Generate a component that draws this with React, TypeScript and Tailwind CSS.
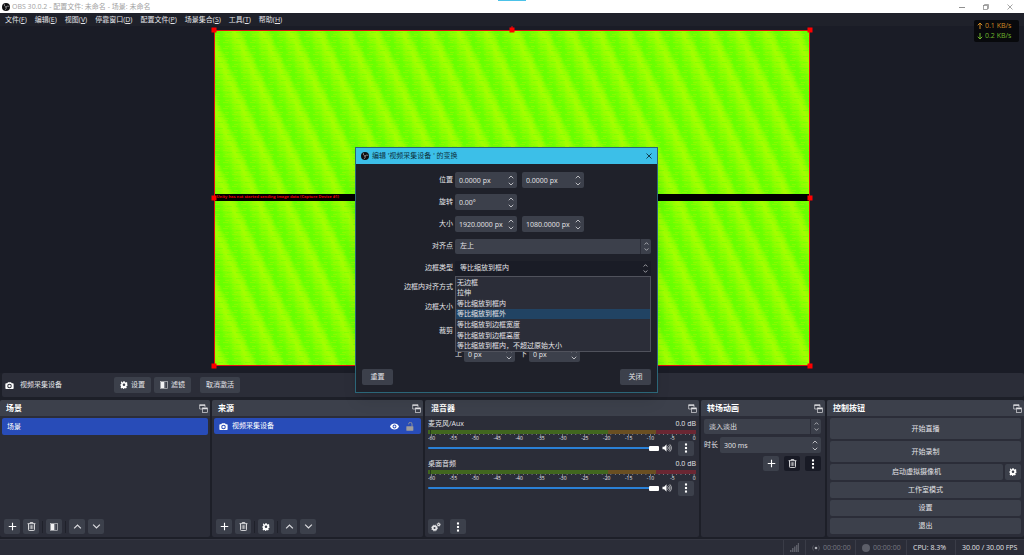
import React from "react";

type KidsProps = { children?: React.ReactNode; className?: string };

const ObsLogo = ({ className = "" }: { className?: string }) => (
  <svg viewBox="0 0 24 24" className={className} aria-hidden="true">
    <circle cx="12" cy="12" r="12" fill="#101012" />
    <g fill="none" stroke="#b9b9bc" strokeWidth="2" strokeLinecap="round">
      <path d="M7 4.5c-.6 3.600 1.400 6.600 5 7.500" />
      <path d="M20.500 10c-3.400-1.400-6.800-.8-8.500 2" />
      <path d="M9.500 20.500c3-1.800 4.200-5 2.500-8.500" />
    </g>
  </svg>
);

const CameraIcon = () => (
  <svg viewBox="0 0 24 24" className="size-[9px] shrink-0" aria-hidden="true">
    <path
      fill="#fff"
      fillRule="evenodd"
      d="M8 3h8l2 3h3a2 2 0 0 1 2 2v11a2 2 0 0 1-2 2H3a2 2 0 0 1-2-2V8a2 2 0 0 1 2-2h3zM12 7.500a6 6 0 1 0 0 12 6 6 0 0 0 0-12zM12 10.200a3.300 3.300 0 1 1 0 6.600 3.300 3.300 0 0 1 0-6.600z"
    />
  </svg>
);

const gearPath =
  "M9.800 1h4.400l.7 3.100 2.200.9 2.700-1.700 3.100 3.100L21.200 9l.8 2 .9-.200v4.400l-2.700.7-1 2.200 1.700 2.600-3.100 3.100-2.700-1.700-2.200.9-.6 2H9.800l-.7-2-2.200-.9-2.700 1.700-3.100-3.100 1.700-2.700-.9-2.200L1 14.200V9.800l1.900-.7.9-2.200-1.700-2.700 3.100-3.100L6.900 4.800l2.200-.9zM12 8a4 4 0 1 0 0 8 4 4 0 0 0 0-8z";

const GearIcon = () => (
  <svg viewBox="0 0 24 25" className="size-[8px] shrink-0" aria-hidden="true">
    <path fill="#fff" fillRule="evenodd" d={gearPath} />
  </svg>
);

const GearsIcon = () => (
  <svg viewBox="0 0 24 24" className="size-[10px]" aria-hidden="true">
    <g fill="none" stroke="#e6e6e8">
      <circle cx="8.500" cy="14.500" r="4.500" strokeWidth="4" />
      <circle cx="8.500" cy="14.500" r="7" strokeWidth="2" strokeDasharray="3 2.500" />
      <circle cx="18.500" cy="6" r="2.500" strokeWidth="2.500" />
      <circle cx="18.500" cy="6" r="4.200" strokeWidth="1.500" strokeDasharray="2 1.300" />
    </g>
  </svg>
);

const FilterIcon = () => (
  <svg viewBox="0 0 24 24" className="size-[8px] shrink-0" aria-hidden="true">
    <rect x="1.500" y="1.500" width="21" height="21" fill="none" stroke="#c8c8cc" strokeWidth="2" />
    <rect x="3" y="3" width="9" height="18" fill="#f2f2f4" />
    <rect x="12" y="3" width="4" height="18" fill="#85878f" />
  </svg>
);

const PlusIcon = () => (
  <svg viewBox="0 0 24 24" className="size-[9px]" aria-hidden="true">
    <path d="M12 2v20M2 12h20" stroke="#fff" strokeWidth="3" />
  </svg>
);

const TrashIcon = () => (
  <svg viewBox="0 0 24 24" className="size-[9px]" aria-hidden="true">
    <g fill="none" stroke="#e8e8ea" strokeWidth="2.400">
      <path d="M1.500 4.500h21M8.500 4V1.500h7V4M4 5v15.500a2 2 0 0 0 2 2h12a2 2 0 0 0 2-2V5" />
      <path d="M8.500 8.500v10M12 8.500v10M15.500 8.500v10" strokeWidth="1.800" />
    </g>
  </svg>
);

const Chevron = ({ up = false, className = "size-[9px]" }: { up?: boolean; className?: string }) => (
  <svg viewBox="0 0 24 24" className={className} aria-hidden="true">
    <path d={up ? "M3 17l9-9 9 9" : "M3 7l9 9 9-9"} fill="none" stroke="#dcdce0" strokeWidth="3.200" />
  </svg>
);

const DotsIcon = () => (
  <svg viewBox="0 0 24 24" className="size-[10px]" aria-hidden="true">
    <g fill="#fff">
      <rect x="9.500" y="1" width="5" height="5" />
      <rect x="9.500" y="9.500" width="5" height="5" />
      <rect x="9.500" y="18" width="5" height="5" />
    </g>
  </svg>
);

const PopoutIcon = () => (
  <svg viewBox="0 0 27 27" className="h-[9px] w-[9px]" aria-hidden="true">
    <g fill="none" stroke="#e2e2e5" strokeWidth="2">
      <path d="M9 15H2V2h16v7" />
      <path d="M2 4h16" strokeWidth="3" />
      <rect x="10" y="12" width="15" height="13" />
      <path d="M10 13.500h15" strokeWidth="4" />
    </g>
  </svg>
);

const EyeIcon = () => (
  <svg viewBox="0 0 24 24" className="size-[9px]" aria-hidden="true">
    <path
      fill="#fff"
      fillRule="evenodd"
      d="M12 4C6.500 4 2.200 7.400 0 12c2.200 4.600 6.500 8 12 8s9.800-3.400 12-8c-2.200-4.600-6.500-8-12-8zm0 2.800a5.200 5.200 0 1 1 0 10.400 5.200 5.200 0 0 1 0-10.400zm0 2.400a2.800 2.800 0 1 0 0 5.600 2.800 2.800 0 0 0 0-5.600z"
    />
  </svg>
);

const UnlockIcon = () => (
  <svg viewBox="0 0 24 27" className="h-[9px] w-[8px]" aria-hidden="true">
    <path d="M8 7V6a5 5 0 0 1 10 0v8" fill="none" stroke="#8d8f98" strokeWidth="3" />
    <rect x="1" y="13" width="21" height="13" rx="1" fill="#a09d9b" />
  </svg>
);

const SpeakerIcon = () => (
  <svg viewBox="0 0 27 24" className="h-[8px] w-[10px]" aria-hidden="true">
    <path d="M0 8h5l7-7v22l-7-7H0z" fill="#fff" />
    <path d="M15 7c3 3 3 7 0 10M18.500 3.500c5 5 5 12 0 17M22 1c6 7 6 15 0 22" fill="none" stroke="#fff" strokeWidth="2" />
  </svg>
);

const IconButton = ({
  label,
  dark = false,
  children,
}: {
  label: string;
  dark?: boolean;
  children: React.ReactNode;
}) => (
  <button
    type="button"
    aria-label={label}
    className={`flex h-[15px] w-4 shrink-0 items-center justify-center rounded-[2px] ${dark ? "bg-[#181a25]" : "bg-[#3c404b]"}`}
  >
    {children}
  </button>
);

const Separator = () => <span className="h-3 w-px bg-[#1f212a]" />;

const Button = ({ children, className = "" }: KidsProps) => (
  <button
    type="button"
    className={`flex items-center justify-center gap-[3px] whitespace-nowrap rounded-[2px] bg-[#3c404b] ${className}`}
  >
    {children}
  </button>
);

const Dock = ({ title, children }: { title: string; children: React.ReactNode }) => (
  <section className="flex min-w-0 flex-col overflow-hidden rounded-[2px] bg-[#2b2d38]">
    <header className="flex h-4 items-center justify-between bg-[#3c404b] pr-[2px] pl-[6px]">
      <h2 className="text-[8px] leading-4 font-bold text-white">{title}</h2>
      <button type="button" aria-label={`${title} 浮动`}>
        <PopoutIcon />
      </button>
    </header>
    {children}
  </section>
);

const SpinBox = ({
  id,
  label,
  value,
  className = "w-[62px]",
}: {
  id: string;
  label?: string;
  value: string;
  className?: string;
}) => (
  <div className={`flex h-4 items-center rounded-[2px] bg-[#3c404b] pr-[3px] pl-1 ${className}`}>
    <input
      id={id}
      aria-label={label}
      defaultValue={value}
      className="h-full min-w-0 flex-1 bg-transparent text-[7px] outline-none"
    />
    <span className="flex flex-col gap-px">
      <Chevron up className="size-[6px]" />
      <Chevron className="size-[6px]" />
    </span>
  </div>
);

const Combo = ({ id, label, value, open = false }: { id: string; label?: string; value: string; open?: boolean }) => (
  <div className={`flex h-[15px] w-full items-center rounded-[2px] ${open ? "bg-[#1a1c26]" : "bg-[#3c404b]"}`}>
    <select
      id={id}
      aria-label={label}
      className="h-full min-w-0 flex-1 appearance-none bg-transparent pl-[5px] text-[7px] outline-none"
    >
      <option>{value}</option>
    </select>
    <span
      className={`flex h-full w-[11px] flex-col items-center justify-center gap-px ${open ? "" : "border-l border-[#2b2d38]"}`}
    >
      <Chevron up className="size-[5px]" />
      <Chevron className="size-[5px]" />
    </span>
  </div>
);

const menus = [
  ["文件", "F"],
  ["编辑", "E"],
  ["视图", "V"],
  ["停靠窗口", "D"],
  ["配置文件", "P"],
  ["场景集合", "S"],
  ["工具", "T"],
  ["帮助", "H"],
];

const TitleBar = () => (
  <header className="relative flex h-[13px] items-center justify-between bg-white pr-[11px] pl-[2px] text-[#a2a2a2]">
    <h1 className="flex items-center gap-[2px] leading-3">
      <ObsLogo className="size-2" />
      OBS 30.0.2 - 配置文件: 未命名 - 场景: 未命名
    </h1>
    <span className="absolute top-0 left-1/2 h-px w-7 -translate-x-1/2 bg-[#4cc2e8]" />
    <div className="flex items-center gap-[18px]">
      <button type="button" aria-label="最小化">
        <svg viewBox="0 0 6 6" className="size-[6px]" fill="none" stroke="#909090">
          <path d="M0 3.500h6" />
        </svg>
      </button>
      <button type="button" aria-label="还原">
        <svg viewBox="0 0 12 12" className="size-[6px]" fill="none" stroke="#888" strokeWidth="1.500">
          <rect x="1" y="3" width="8" height="8" />
          <path d="M3 3V1h8v8H9" />
        </svg>
      </button>
      <button type="button" aria-label="关闭窗口">
        <svg viewBox="0 0 12 12" className="size-[6px]" fill="none" stroke="#888" strokeWidth="1.500">
          <path d="M1 1l10 10M11 1L1 11" />
        </svg>
      </button>
    </div>
  </header>
);

const MenuBar = () => (
  <nav className="flex h-[13px] items-center gap-2 bg-[#1f212a] pl-[5px]">
    {menus.map(([name, key]) => (
      <button key={name} type="button" className="leading-3 whitespace-nowrap">
        {name}(<u>{key}</u>)
      </button>
    ))}
  </nav>
);

const handles = [
  "top-0 left-0",
  "top-0 left-1/2",
  "top-0 left-full",
  "top-1/2 left-0",
  "top-1/2 left-full",
  "top-full left-0",
  "top-full left-1/2",
  "top-full left-full",
];

const Preview = () => (
  <main className="flex flex-1 items-start justify-center bg-[#1a1c26] pt-1 pb-[7px]">
    <div className="relative aspect-video w-[58.3%]">
      <svg className="absolute inset-0 size-full" aria-hidden="true">
        <defs>
          <linearGradient id="band">
            <stop offset="0" stopColor="#6aff00" />
            <stop offset="0.200" stopColor="#6cff00" />
            <stop offset="0.500" stopColor="#8cff00" />
            <stop offset="0.700" stopColor="#a2ff00" />
            <stop offset="0.850" stopColor="#92ff00" />
            <stop offset="1" stopColor="#6aff00" />
          </linearGradient>
          <pattern id="stripes" width="28" height="28" patternUnits="userSpaceOnUse" patternTransform="skewX(25)">
            <rect width="28" height="28" fill="url(#band)" />
          </pattern>
          <pattern id="dashes" width="9" height="6" patternUnits="userSpaceOnUse">
            <rect x="0" y="0" width="5" height="1" fill="#b8f400" opacity="0.350" />
            <rect x="4" y="2" width="5" height="1" fill="#58ff00" opacity="0.350" />
            <rect x="2" y="4" width="4" height="1" fill="#b8f400" opacity="0.350" />
          </pattern>
        </defs>
        <rect width="100%" height="100%" fill="url(#stripes)" />
        <rect width="100%" height="100%" fill="url(#dashes)" />
      </svg>
      <div className="absolute inset-0 flex flex-col justify-center border border-[#e01010]">
        <p className="h-[7px] bg-black pl-[2px] text-[4px] leading-[6px] font-bold whitespace-nowrap text-[#e00000]">
          Unity has not started sending image data (Capture Device #1)
        </p>
      </div>
      <span className="absolute bottom-full left-1/2 h-1 w-px -translate-x-1/2 bg-[#e01010]" />
      {handles.map((place) => (
        <span key={place} className={`absolute size-[5px] -translate-x-1/2 -translate-y-1/2 bg-[#ff0000] ${place}`} />
      ))}
    </div>
  </main>
);

const Arrow = ({ down = false }: { down?: boolean }) => (
  <svg viewBox="0 0 12 16" className="h-2 w-[6px]" fill="none" stroke="currentColor" strokeWidth="2" aria-hidden="true">
    <path d={down ? "M6 2v12M1.500 9.500L6 14l4.500-4.500" : "M6 14V2M1.500 6.500L6 2l4.500 4.500"} />
  </svg>
);

const NetworkMeter = () => (
  <aside className="absolute top-5 right-[5px] flex h-[22px] w-[45px] flex-col justify-center rounded-[2px] bg-[#08090c] pl-[3px] leading-[10px]">
    <p className="flex items-center gap-[2px] text-[#d08a24]">
      <Arrow />
      0.1 KB/s
    </p>
    <p className="flex items-center gap-[2px] text-[#6fb52c]">
      <Arrow down />
      0.2 KB/s
    </p>
  </aside>
);

const ContextBar = () => (
  <section className="mb-[3px] ml-[2px] flex h-6 items-center rounded-[2px] bg-[#2b2d38] pl-[3px]">
    <CameraIcon />
    <p className="w-[100px] pl-[6px]">视频采集设备</p>
    <Button className="h-4 w-[37px]">
      <GearIcon />
      设置
    </Button>
    <Button className="ml-[3px] h-4 w-[37px]">
      <FilterIcon />
      滤镜
    </Button>
    <Button className="ml-[9px] h-4 w-10">取消激活</Button>
  </section>
);

const ScenesDock = () => (
  <Dock title="场景">
    <ul className="flex-1 px-[2px] pt-[2px]">
      <li className="flex h-[17px] items-center rounded-[2px] bg-[#284cb8] pl-[5px] text-white">场景</li>
    </ul>
    <div className="flex items-center gap-[3px] px-1 pb-[3px]">
      <IconButton label="添加场景">
        <PlusIcon />
      </IconButton>
      <IconButton label="移除场景">
        <TrashIcon />
      </IconButton>
      <Separator />
      <IconButton label="场景滤镜">
        <FilterIcon />
      </IconButton>
      <Separator />
      <IconButton label="上移场景">
        <Chevron up />
      </IconButton>
      <IconButton label="下移场景">
        <Chevron />
      </IconButton>
    </div>
  </Dock>
);

const SourcesDock = () => (
  <Dock title="来源">
    <ul className="flex-1 px-[2px] pt-[2px]">
      <li className="flex h-4 items-center gap-1 rounded-[2px] bg-[#284cb8] pr-[7px] pl-[5px] text-white">
        <CameraIcon />
        <span className="flex-1">视频采集设备</span>
        <button type="button" aria-label="切换可见性">
          <EyeIcon />
        </button>
        <button type="button" aria-label="锁定" className="ml-[3px]">
          <UnlockIcon />
        </button>
      </li>
    </ul>
    <div className="flex items-center gap-[3px] px-1 pb-[3px]">
      <IconButton label="添加来源">
        <PlusIcon />
      </IconButton>
      <IconButton label="移除来源">
        <TrashIcon />
      </IconButton>
      <Separator />
      <IconButton label="来源属性">
        <GearIcon />
      </IconButton>
      <Separator />
      <IconButton label="上移来源">
        <Chevron up />
      </IconButton>
      <IconButton label="下移来源">
        <Chevron />
      </IconButton>
    </div>
  </Dock>
);

const marks = [-60, -55, -50, -45, -40, -35, -30, -25, -20, -15, -10, -5, 0];

const Meter = () => (
  <svg viewBox="0 0 268 10" className="block w-full" aria-hidden="true">
    <rect width="180" height="4" fill="#41661f" />
    <rect x="180" width="48" height="4" fill="#6a4f22" />
    <rect x="228" width="40" height="4" fill="#6a2733" />
    <rect x="2" width="1" height="4" fill="#24381a" />
    {Array.from({ length: 61 }, (_, i) => (
      <rect key={i} x={3 + i * 4.38} y="4" width="0.600" height={i % 5 ? 1 : 2} fill="#a9abb2" />
    ))}
    {marks.map((mark, i) => (
      <text key={mark} x={3.500 + i * 21.900} y="9.500" fontSize="5" textAnchor="middle" fill="#e8e8ec">
        {mark}
      </text>
    ))}
  </svg>
);

const Channel = ({ name }: { name: string }) => (
  <div className="h-10">
    <div className="flex h-3 items-center justify-between">
      <span>{name}</span>
      <span>0.0 dB</span>
    </div>
    <Meter />
    <div className="flex h-4 items-center">
      <input
        type="range"
        aria-label={name}
        defaultValue={100}
        className="h-[2px] min-w-0 flex-1 appearance-none rounded-full bg-[#2a80d6] [&::-webkit-slider-thumb]:h-[5px] [&::-webkit-slider-thumb]:w-[10px] [&::-webkit-slider-thumb]:appearance-none [&::-webkit-slider-thumb]:rounded-[1px] [&::-webkit-slider-thumb]:bg-white"
      />
      <button type="button" aria-label={`${name} 静音`} className="mr-[6px] ml-[3px]">
        <SpeakerIcon />
      </button>
      <IconButton label={`${name} 选项`}>
        <DotsIcon />
      </IconButton>
      <span className="w-[2px]" />
    </div>
  </div>
);

const MixerDock = () => (
  <Dock title="混音器">
    <div className="flex-1 pt-[2px] pr-[3px] pl-[3px]">
      <Channel name="麦克风/Aux" />
      <Channel name="桌面音频" />
    </div>
    <div className="flex items-center gap-[6px] px-[3px] pb-[3px]">
      <IconButton label="高级音频属性">
        <GearsIcon />
      </IconButton>
      <IconButton label="混音器选项">
        <DotsIcon />
      </IconButton>
    </div>
  </Dock>
);

const TransitionsDock = () => (
  <Dock title="转场动画">
    <div className="flex flex-col gap-[3px] pt-[3px] pr-1 pl-[3px]">
      <Combo id="transition" label="转场" value="淡入淡出" />
      <div className="flex items-center gap-[2px]">
        <label htmlFor="duration">时长</label>
        <SpinBox id="duration" value="300 ms" className="min-w-0 flex-1" />
      </div>
      <div className="flex justify-end gap-[5px]">
        <IconButton label="添加转场">
          <PlusIcon />
        </IconButton>
        <IconButton label="移除转场" dark>
          <TrashIcon />
        </IconButton>
        <IconButton label="转场选项" dark>
          <DotsIcon />
        </IconButton>
      </div>
    </div>
  </Dock>
);

const ControlsDock = () => (
  <Dock title="控制按钮">
    <div className="flex flex-col gap-[2px] px-[3px] pt-[2px] pb-[3px]">
      <Button className="h-[21px]">开始直播</Button>
      <Button className="h-[21px]">开始录制</Button>
      <div className="flex gap-[2px]">
        <Button className="h-4 flex-1">启动虚拟摄像机</Button>
        <button
          type="button"
          aria-label="虚拟摄像机设置"
          className="flex size-4 items-center justify-center rounded-[2px] bg-[#3c404b]"
        >
          <GearIcon />
        </button>
      </div>
      <Button className="h-4">工作室模式</Button>
      <Button className="h-4">设置</Button>
      <Button className="h-4">退出</Button>
    </div>
  </Dock>
);

const StatusCell = ({ children, className = "" }: KidsProps) => (
  <div className={`flex h-full items-center gap-[3px] border-l border-[#3a3c47] pl-[6px] ${className}`}>{children}</div>
);

const StatusBar = () => (
  <footer className="mt-[2px] flex h-4 items-center justify-end border-t border-[#343641] bg-[#2b2d38]">
    <StatusCell className="w-[22px]">
      <svg viewBox="0 0 9 9" className="size-[9px]" fill="#5c5e68" aria-hidden="true">
        <path d="M0 7h1.500v2H0zM2 5h1.500v4H2zM4 3.500h1.500V9H4zM6 2h1.400v7H6zM7.800 0H9v9H7.800z" />
      </svg>
    </StatusCell>
    <StatusCell className="w-[50px] text-[#777983]">
      <svg viewBox="0 0 8 8" className="size-2" aria-hidden="true">
        <circle cx="4" cy="4" r="1.300" fill="#b0b2b8" />
        <path d="M1.500 1.500a4 4 0 0 0 0 5M6.500 1.500a4 4 0 0 1 0 5" fill="none" stroke="#50525c" />
      </svg>
      00:00:00
    </StatusCell>
    <StatusCell className="w-[51px] text-[#777983]">
      <span className="size-2 shrink-0 rounded-full bg-[#5c5e68]" />
      00:00:00
    </StatusCell>
    <StatusCell className="w-[49px]">CPU: 8.3%</StatusCell>
    <StatusCell className="w-[69px]">30.00 / 30.00 FPS</StatusCell>
  </footer>
);

const boundsTypes = [
  "无边框",
  "拉伸",
  "等比缩放到框内",
  "等比缩放到框外",
  "等比缩放到边框宽度",
  "等比缩放到边框高度",
  "等比缩放到框内，不超过原始大小",
];

const Row = ({ label, htmlFor, children }: { label: string; htmlFor?: string; children?: React.ReactNode }) => (
  <div className="grid h-4 grid-cols-[97px_1fr] items-center gap-[2px]">
    <label htmlFor={htmlFor} className="text-right">
      {label}
    </label>
    <div className="flex min-w-0 gap-[5px]">{children}</div>
  </div>
);

const TransformDialog = () => (
  <div
    role="dialog"
    aria-label="编辑变换"
    className="absolute top-[147px] left-[355px] w-[303px] border border-[#2b6678] bg-[#1f212a] shadow-lg"
  >
    <header className="flex h-4 items-center justify-between bg-[#3cbfe8] pr-[5px] pl-[5px] text-[#0d3240]">
      <h2 className="flex items-center gap-[3px]">
        <ObsLogo className="size-2" />
        编辑 '视频采集设备 ' 的变换
      </h2>
      <button type="button" aria-label="关闭对话框">
        <svg viewBox="0 0 12 12" className="size-[6px]" stroke="#0d3240" strokeWidth="1.800" fill="none">
          <path d="M1 1l10 10M11 1L1 11" />
        </svg>
      </button>
    </header>
    <div className="pt-2 pr-[6px] pb-[7px]">
      <div className="flex flex-col gap-[6px]">
        <Row label="位置" htmlFor="pos-x">
          <SpinBox id="pos-x" value="0.0000 px" />
          <SpinBox id="pos-y" label="位置 Y" value="0.0000 px" />
        </Row>
        <Row label="旋转" htmlFor="rotation">
          <SpinBox id="rotation" value="0.00°" />
        </Row>
        <Row label="大小" htmlFor="size-w">
          <SpinBox id="size-w" value="1920.0000 px" />
          <SpinBox id="size-h" label="高度" value="1080.0000 px" />
        </Row>
        <Row label="对齐点" htmlFor="alignment">
          <Combo id="alignment" value="左上" />
        </Row>
        <div className="relative">
          <Row label="边框类型" htmlFor="bounds-type">
            <Combo id="bounds-type" value="等比缩放到框内" open />
          </Row>
          <ul
            role="listbox"
            aria-label="边框类型"
            className="absolute top-4 right-0 left-[99px] z-10 grid h-[76px] grid-rows-7 border border-[#50525c] bg-[#2b2d38]"
          >
            {boundsTypes.map((type) => (
              <li
                key={type}
                role="option"
                aria-selected={type === "等比缩放到框外"}
                className={`flex min-h-0 items-center pl-px leading-none ${type === "等比缩放到框外" ? "bg-[#214363]" : ""}`}
              >
                {type}
              </li>
            ))}
          </ul>
        </div>
      </div>
      <div className="mt-[3px] flex flex-col gap-1">
        <Row label="边框内对齐方式" />
        <Row label="边框大小" />
      </div>
      <div className="mt-2 flex flex-col gap-[7px]">
        <Row label="裁剪" />
        <div className="flex h-4 items-center gap-[2px] pl-[99px]">
          <label htmlFor="crop-top">上</label>
          <SpinBox id="crop-top" value="0 px" className="w-[51px]" />
          <label htmlFor="crop-bottom" className="ml-[3px]">
            下
          </label>
          <SpinBox id="crop-bottom" value="0 px" className="w-[51px]" />
        </div>
      </div>
      <div className="mt-[7px] flex justify-between pl-[6px]">
        <Button className="h-4 w-[31px]">重置</Button>
        <Button className="h-4 w-[31px]">关闭</Button>
      </div>
    </div>
  </div>
);

export default function App() {
  return (
    <div className="relative flex min-h-screen flex-col bg-[#1d1f28] font-['Open_Sans','Noto_Sans_CJK_SC',sans-serif] text-[7px] leading-[10px] text-[#e4e4e8]">
      <TitleBar />
      <MenuBar />
      <Preview />
      <ContextBar />
      <div className="grid grid-cols-[210fr_211fr_274fr_124fr_197fr] gap-[2px]">
        <ScenesDock />
        <SourcesDock />
        <MixerDock />
        <TransitionsDock />
        <ControlsDock />
      </div>
      <StatusBar />
      <NetworkMeter />
      <TransformDialog />
    </div>
  );
}
